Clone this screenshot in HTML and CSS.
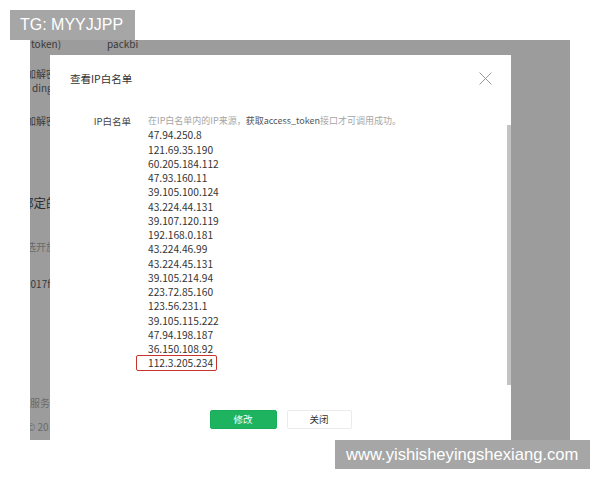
FILE: index.html
```html
<!DOCTYPE html>
<html lang="zh">
<head>
<meta charset="utf-8">
<title>查看IP白名单</title>
<link rel="stylesheet" href="styles.css">
</head>
<body>
<div class="stage">
  <div class="backdrop">
    <div class="bg-row r1"><span class="c-a">token)</span><span class="c-b">packbi</span></div>
    <div class="bg-row r2"><span class="cut">加解密</span></div>
    <div class="bg-row r3">ding</div>
    <div class="bg-row r4"><span class="cut">加解密</span></div>
    <div class="bg-row r5 big"><span class="cut2">绑定的</span></div>
    <div class="bg-row r6 light"><span class="cut">选开放</span></div>
    <div class="bg-row r7"><span class="cut3">2017f</span></div>
    <div class="bg-row r8 light"><span class="cut4">服务</span></div>
    <div class="bg-row r9 light">© 201</div>
  </div>

  <div class="modal">
    <div class="modal-head">
      <span class="title">查看IP白名单</span>
      <svg class="close" width="13" height="13" viewBox="0 0 13 13"><path d="M0.5 0.5 L12.5 12.5 M12.5 0.5 L0.5 12.5" stroke="#9a9a9a" stroke-width="1" fill="none"/></svg>
    </div>
    <div class="modal-body">
      <div class="label">IP白名单</div>
      <div class="values">
        <div class="hint">在IP白名单内的IP来源，<em>获取access_token</em>接口才可调用成功。</div>
        <div class="ip">47.94.250.8</div>
        <div class="ip">121.69.35.190</div>
        <div class="ip">60.205.184.112</div>
        <div class="ip">47.93.160.11</div>
        <div class="ip">39.105.100.124</div>
        <div class="ip">43.224.44.131</div>
        <div class="ip">39.107.120.119</div>
        <div class="ip">192.168.0.181</div>
        <div class="ip">43.224.46.99</div>
        <div class="ip">43.224.45.131</div>
        <div class="ip">39.105.214.94</div>
        <div class="ip">223.72.85.160</div>
        <div class="ip">123.56.231.1</div>
        <div class="ip">39.105.115.222</div>
        <div class="ip">47.94.198.187</div>
        <div class="ip">36.150.108.92</div>
        <div class="ip"><span class="ip-mark">112.3.205.234</span></div>
      </div>
    </div>
    <div class="modal-foot">
      <button class="btn btn-primary">修改</button>
      <button class="btn btn-default">关闭</button>
    </div>
    <div class="scrollbar"></div>
  </div>
</div>

<div class="wm wm-tl">TG: MYYJJPP</div>
<div class="wm wm-br">www.yishisheyingshexiang.com</div>
</body>
</html>
```

FILE: styles.css
```css
html, body {
  margin: 0;
  padding: 0;
  background: #ffffff;
}

body {
  width: 600px;
  height: 480px;
  position: relative;
  overflow: hidden;
  font-family: "Noto Sans CJK SC", "Noto Sans", sans-serif;
}

.stage {
  margin: 40px 0 0 30px;
  width: 540px;
  height: 400px;
  background: #9c9c9c;
  position: relative;
  overflow: hidden;
}

/* dimmed page behind the dialog */
.backdrop {
  display: flex;
  flex-direction: column;
  font-size: 10px;
  color: #3a3a3a;
}

.bg-row {
  height: 14px;
  line-height: 14px;
  white-space: nowrap;
  display: flex;
}

.bg-row.light { color: #6a6a6a; }
.bg-row.big { font-size: 12.5px; color: #2e2e2e; }

.r1 { margin-top: -3px; }
.r2 { margin-top: 16px; }
.r3 { margin-top: 0; padding-left: 2px; }
.r4 { margin-top: 19px; }
.r5 { margin-top: 68px; }
.r6 { margin-top: 30px; }
.r7 { margin-top: 23px; }
.r8 { margin-top: 105px; }
.r9 { margin-top: 10px; margin-left: -3px; }

.c-a { margin-left: 1px; }
.c-b { margin-left: 46px; }
.cut { margin-left: -4px; }
.cut2 { margin-left: -9px; }
.cut3 { margin-left: -5px; }
.cut4 { margin-left: 0; }

/* dialog */
.modal {
  position: absolute;
  left: 20px;
  top: 15px;
  width: 461px;
  bottom: 0;
  background: #ffffff;
}

.modal-head {
  height: 46px;
  display: flex;
  align-items: center;
  justify-content: space-between;
  padding: 0 19px 0 20px;
}

.title {
  font-size: 10.5px;
  color: #333333;
}

.close { display: block; }

.modal-body {
  display: flex;
  padding-top: 13px;
  line-height: 14.25px;
}

.label {
  width: 81px;
  text-align: right;
  font-size: 9.5px;
  color: #444444;
  flex: none;
}

.values {
  margin-left: 17px;
  font-size: 10.2px;
  color: #353535;
}

.hint {
  font-size: 9px;
  color: #a6a6a6;
  white-space: nowrap;
}

.hint em {
  font-style: normal;
  color: #555555;
}

.ip-mark {
  position: relative;
}

.ip-mark::after {
  content: "";
  position: absolute;
  left: -12px;
  top: 0;
  width: 79px;
  height: 14px;
  border: 1.5px solid #c8332d;
  border-radius: 2px;
}

.modal-foot {
  display: flex;
  justify-content: center;
  gap: 10px;
  margin-top: 39px;
}

.btn {
  height: 19px;
  padding: 0;
  font-family: "Noto Sans CJK SC", sans-serif;
  font-size: 9.5px;
  line-height: 17px;
  border-radius: 2px;
  cursor: pointer;
}

.btn-primary {
  width: 67px;
  background: #1db35f;
  border: 1px solid #1aae5b;
  color: #ffffff;
}

.btn-default {
  width: 65px;
  background: #ffffff;
  border: 1px solid #ebebeb;
  color: #333333;
}

.scrollbar {
  position: absolute;
  right: 0;
  top: 70px;
  width: 4px;
  height: 260px;
  background: #c3c3c3;
}

/* watermarks */
.wm {
  position: absolute;
  background: #a6a6a6;
  color: #ffffff;
  font-family: "Liberation Sans", Arial, sans-serif;
  font-size: 16px;
  height: 30px;
  line-height: 30px;
  white-space: nowrap;
}

.wm-tl {
  left: 10px;
  top: 10px;
  width: 125px;
  padding-left: 10px;
  box-sizing: border-box;
}

.wm-br {
  left: 335px;
  top: 440px;
  width: 255px;
  height: 29px;
  line-height: 29px;
  padding-left: 11px;
  font-size: 16.6px;
  box-sizing: border-box;
}
```
